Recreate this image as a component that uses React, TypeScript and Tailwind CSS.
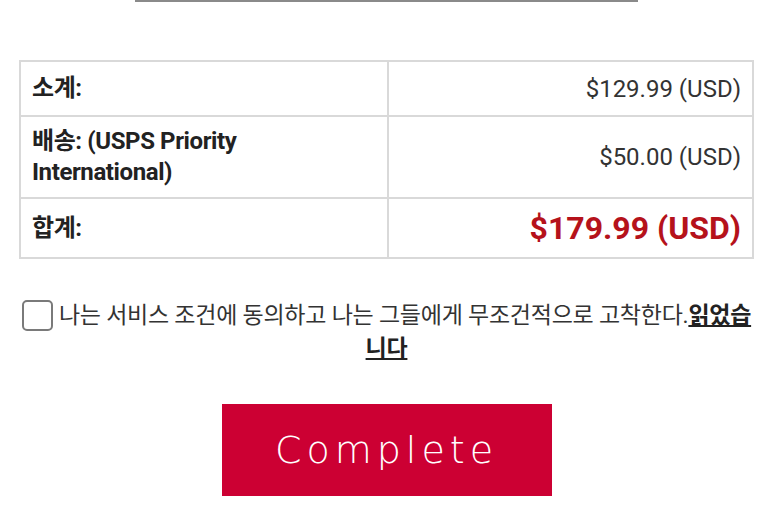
import React from 'react'

const rows = [
  { label: '소계:', value: '$129.99 (USD)', h: 'h-[55px]', total: false },
  { label: '배송: (USPS Priority International)', value: '$50.00 (USD)', h: 'h-[82px]', total: false },
  { label: '합계:', value: '$179.99 (USD)', h: 'h-[60px]', total: true },
]

export default function App() {
  return (
    <div className="w-[773px] h-[523px] bg-white overflow-hidden font-['Roboto','Noto_Sans_CJK_KR',sans-serif] text-[#222]">
      <div className="mx-auto w-[503px] h-[2px] bg-[#8a8a8a]" />

      <div className="px-[19px] pt-[58px]">
        <table className="w-full border-collapse">
          <tbody>
            {rows.map((r) => (
              <tr key={r.label} className={r.h}>
                <td className="w-[368px] border-2 border-[#d9d9d9] pl-[11px] pr-[100px] text-[24px] leading-[31px] font-bold tracking-[-0.4px]">
                  {r.label}
                </td>
                <td
                  className={`border-2 border-[#d9d9d9] pr-[11px] text-right ${
                    r.total
                      ? 'text-[32px] font-bold text-[#b5121b]'
                      : 'text-[24px] text-[#333]'
                  }`}
                >
                  {r.value}
                </td>
              </tr>
            ))}
          </tbody>
        </table>
      </div>

      <p className="mt-[40px] px-[16px] text-center text-[23px] leading-[33px] text-[#333] tracking-[-0.25px]">
        <span className="inline-block w-[31px] h-[31px] align-[-8px] border-2 border-[#7a7a7a] rounded-[5px] mr-[6px]" />
        나는 서비스 조건에 동의하고 나는 그들에게 무조건적으로 고착한다.
        <a className="font-bold underline text-[#222]">읽었습니다</a>
      </p>

      <div className="flex justify-center mt-[39px]">
        <button className="w-[330px] h-[92px] bg-[#cc0033] text-white text-[38px] tracking-[5px] font-['DejaVu_Sans',sans-serif] font-light">
          Complete
        </button>
      </div>
    </div>
  )
}
